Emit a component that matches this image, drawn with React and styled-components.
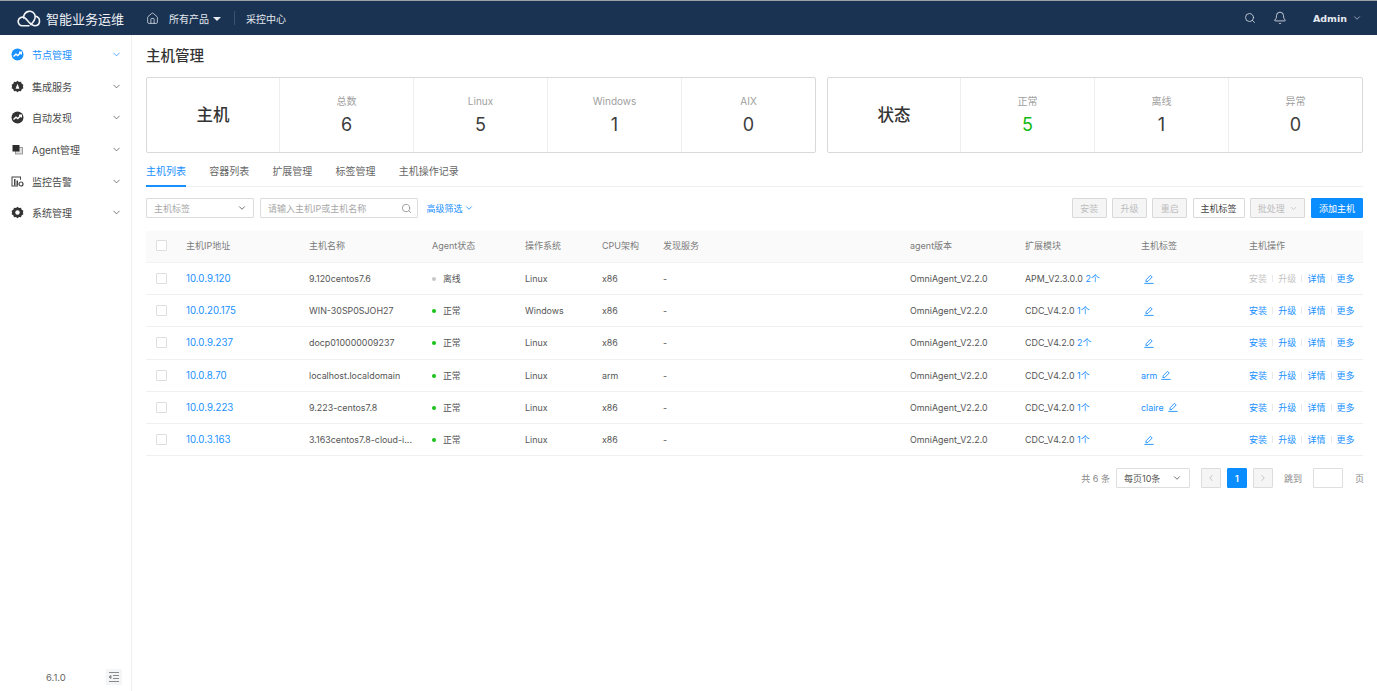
import React from "react";
import styled, { createGlobalStyle } from "styled-components";
import { ChevronDown, ChevronLeft, ChevronRight, Search, Bell, House } from "lucide-react";

const Global = createGlobalStyle`
  html, body { margin: 0; padding: 0; background: #fff; }
  body { font-family: Inter, "Noto Sans CJK SC", sans-serif; color: #4a4a4a; -webkit-font-smoothing: antialiased; }
  * { box-sizing: border-box; }
`;

const Page = styled.div`width: 1377px; height: 691px; display: flex; flex-direction: column; overflow: hidden;`;
const Header = styled.header`height: 35px; flex: none; background: #1a3352; border-top: 1px solid #9aa0a6; display: flex; align-items: center; color: #e4e9ef; font-size: 10px;`;
const Brand = styled.div`width: 131px; flex: none; display: flex; align-items: center; padding-left: 17px; gap: 5px; font-size: 13px; color: #eef1f5; white-space: nowrap;`;
const NavHome = styled.div`margin-left: 15px; display: flex; align-items: center; color: #dfe5ec;`;
const NavItem = styled.div`margin-left: 10px; display: flex; align-items: center; gap: 4px; white-space: nowrap;`;
const Caret = styled.span`width: 0; height: 0; border-left: 4px solid transparent; border-right: 4px solid transparent; border-top: 4px solid #e9edf2; margin-top: 1px;`;
const NavSep = styled.span`width: 1px; height: 14px; background: #3b526e; margin-left: 13px;`;
const NavLink = styled.div`margin-left: 11px; white-space: nowrap;`;
const HeaderRight = styled.div`margin-left: auto; display: flex; align-items: center; padding-right: 15px; color: #e4e9ef;`;
const AdminName = styled.span`font-family: "DejaVu Sans", sans-serif; font-size: 9.5px; font-weight: 700; margin-left: 26px; margin-right: 5px;`;
const BellWrap = styled.span`display: flex; margin-left: 17px;`;

const Body = styled.div`flex: 1; display: flex; min-height: 0;`;
const Side = styled.aside`width: 132px; flex: none; border-right: 1px solid #eef0f2; padding-top: 4px; display: flex; flex-direction: column; position: relative;`;
const SideRow = styled.div`height: 31.6px; display: flex; align-items: center; padding-left: 11px; padding-right: 9.5px; font-size: 10px; color: ${p => (p.$on ? "#1890ff" : "#4a4a4a")};`;
const SideIcon = styled.span`width: 13px; height: 13px; display: flex; margin-right: 8px; flex: none;`;
const SideText = styled.span`flex: 1; white-space: nowrap;`;
const SideFoot = styled.div`margin-top: auto; height: 28px; display: flex; align-items: center; padding-left: 46px; padding-right: 9px; justify-content: space-between; font-size: 9.5px; color: #666;`;
const Collapse = styled.span`width: 16px; height: 16px; background: #f4f5f6; display: flex; align-items: center; justify-content: center;`;

const Main = styled.main`flex: 1; min-width: 0; padding: 0 14px;`;
const Title = styled.h1`margin: 0; height: 42px; padding-bottom: 4px; display: flex; align-items: center; font-size: 14.5px; font-weight: 500; color: #333;`;
const Stats = styled.div`display: flex; gap: 11px;`;
const StatCard = styled.div`width: ${p => p.$w}px; height: 76px; flex: none; display: flex; border: 1px solid #d9d9d9; border-radius: 2px;`;
const StatHead = styled.div`width: 132px; flex: none; display: flex; align-items: center; justify-content: center; font-size: 16.5px; font-weight: 500; color: #333; padding-bottom: 2px;`;
const StatCell = styled.div`flex: 1; border-left: 1px solid #eeeeee; display: flex; flex-direction: column; align-items: center; padding-top: 17px;`;
const StatLabel = styled.div`font-size: 10px; line-height: 13px; color: #a0a0a0;`;
const StatValue = styled.div`font-size: 18px; line-height: 24px; margin-top: 5px; color: ${p => p.$c || "#3c3c3c"};`;

const Tabs = styled.div`display: flex; gap: 23.2px; height: 34px; border-bottom: 1px solid #f0f0f0;`;
const Tab = styled.div`height: 34px; display: flex; align-items: center; padding-top: 3px; font-size: 10px; white-space: nowrap; color: ${p => (p.$on ? "#1890ff" : "#666")}; border-bottom: 2px solid ${p => (p.$on ? "#1890ff" : "transparent")};`;

const Bar = styled.div`display: flex; align-items: center; height: 20px; margin-top: 11px; font-size: 9px;`;
const SelectBox = styled.div`width: 107.5px; height: 20px; border: 1px solid #dcdcdc; border-radius: 1px; display: flex; align-items: center; justify-content: space-between; padding: 0 6px 0 7px; color: #a8a8a8;`;
const SearchBox = styled.div`width: 158px; height: 20px; margin-left: 6.5px; border: 1px solid #dcdcdc; border-radius: 1px; display: flex; align-items: center; justify-content: space-between; padding: 0 5px 0 7px; color: #a8a8a8; white-space: nowrap;`;
const Advanced = styled.div`margin-left: 8.5px; display: flex; align-items: center; gap: 1.5px; color: #1890ff; white-space: nowrap;`;
const Actions = styled.div`margin-left: auto; display: flex; gap: 5.7px;`;
const Btn = styled.div`height: 20px; width: ${p => p.$w}px; display: flex; align-items: center; justify-content: center; gap: 4px; font-size: 9px; border-radius: 1px; white-space: nowrap;
  border: 1px solid ${p => (p.$kind === "primary" ? "#0a8dff" : "#d9d9d9")};
  background: ${p => (p.$kind === "primary" ? "#0a8dff" : p.$kind === "off" ? "#f5f5f5" : "#fff")};
  color: ${p => (p.$kind === "primary" ? "#fff" : p.$kind === "off" ? "#bdbdbd" : "#444")};`;

const Table = styled.div`margin-top: 13px;`;
const cols = "40px 123px 123px 93px 77px 61px 247px 115px 116px 108px 1fr";
const HeadRow = styled.div`display: grid; grid-template-columns: ${cols}; height: 32px; padding-bottom: 2px; background: #fafafa; align-items: center; font-size: 9px; color: #7a7a7a; border-bottom: 1px solid #f2f2f2;`;
const Row = styled.div`display: grid; grid-template-columns: ${cols}; height: 32.2px; align-items: center; font-size: 8.9px; color: #555; border-bottom: 1px solid #f0f0f0; white-space: nowrap;`;
const CheckCell = styled.div`padding-left: 10px; display: flex;`;
const Check = styled.span`width: 11px; height: 11px; border: 1px solid #dedede; border-radius: 1px; background: #fff;`;
const IpLink = styled.span`color: #1890ff; font-size: 9.7px;`;
const Dot = styled.span`display: inline-block; width: 4px; height: 4px; border-radius: 50%; margin-right: 7px; vertical-align: 1px; background: ${p => (p.$on ? "#17c317" : "#c8c8c8")};`;
const Blue = styled.span`color: #1890ff;`;
const TagCell = styled.div`display: flex; align-items: center; gap: 4px; color: #1890ff; padding-left: ${p => (p.$empty ? "3px" : "0")};`;
const Ops = styled.div`display: flex; align-items: center; font-size: 9px;`;
const Op = styled.span`color: ${p => (p.$off ? "#c4c4c4" : "#1890ff")};`;
const OpSep = styled.span`width: 1px; height: 7px; background: #eaeaea; margin: 0 5.1px;`;

const Pager = styled.div`display: flex; align-items: center; justify-content: flex-end; height: 20px; margin-top: 12px; font-size: 9px; color: #888; white-space: nowrap;`;
const PageSelect = styled.div`width: 74px; height: 20px; margin-left: 6px; border: 1px solid #dedede; border-radius: 1px; display: flex; align-items: center; justify-content: space-between; padding: 0 7px; color: #555;`;
const PageBtn = styled.div`width: 20px; height: 20px; display: flex; align-items: center; justify-content: center; margin-left: ${p => p.$ml || 6}px; border-radius: 1px; border: 1px solid ${p => (p.$on ? "#0a8dff" : "#dcdcdc")}; background: ${p => (p.$on ? "#0a8dff" : "#f5f5f5")}; color: ${p => (p.$on ? "#fff" : "#b8b8b8")}; font-weight: ${p => (p.$on ? 600 : 400)};`;
const Jump = styled.span`margin-left: 11px;`;
const JumpInput = styled.div`width: 30px; height: 20px; margin-left: 11px; border: 1px solid #dedede; border-radius: 1px;`;
const PageUnit = styled.span`margin-left: 12px; margin-right: -1px;`;

const Logo = () => (
  <svg width="24" height="17" viewBox="0 0 24 17" fill="none" stroke="#f2f4f7" strokeWidth="1.6" strokeLinecap="round">
    <path d="M12 15.800H5.500A4.300 4.300 0 1 1 7.500 7.700C10.500 9 12.500 15.800 18.500 15.800A4.800 4.800 0 0 0 18.300 6.300" />
    <path d="M6.700 8A5.800 5.800 0 0 1 18.300 6.300C18.300 9.500 16 12.500 13.800 14.500" />
  </svg>
);
const EditGlyph = () => (
  <svg width="10" height="10" viewBox="0 0 10 10" fill="none" stroke="#1890ff" strokeWidth="0.9">
    <path d="M2.200 5.700L6.500 1.300l1.700 1.700-4.300 4.400-2 .3z" />
    <path d="M0.300 9.400h9.400" />
  </svg>
);
const IconTrend = ({ c }) => (
  <svg width="13" height="13" viewBox="0 0 13 13"><circle cx="6.500" cy="6.500" r="6" fill={c} /><path d="M2.500 8.500l2.500-2.300 1.800 1.300 3-3M8 4.300h2.300v2.300" fill="none" stroke="#fff" strokeWidth="1.400" /></svg>
);
const IconGear = ({ letter }) => (
  <svg width="13" height="13" viewBox="0 0 13 13"><path d="M6.500 .7l1.500 1.300 2-.2.700 1.900 1.700 1-.5 1.800.5 1.800-1.700 1-.7 1.900-2-.2-1.500 1.300-1.500-1.300-2 .2-.7-1.900-1.700-1 .5-1.800-.5-1.800 1.700-1 .7-1.900 2 .2z" fill="#333" />{letter ? <path d="M6.500 3.800L4.600 8.800h3.800z" fill="#fff" /> : <circle cx="6.500" cy="6.500" r="2.200" fill="#fff" />}</svg>
);
const IconCopy = () => (
  <svg width="13" height="13" viewBox="0 0 13 13"><rect x="4.500" y="4.500" width="7" height="6.500" fill="#ddd" stroke="#888" strokeWidth=".8" /><rect x="1.500" y="2" width="7" height="6.500" fill="#2c2c2c" /></svg>
);
const IconMonitor = () => (
  <svg width="13" height="13" viewBox="0 0 13 13" fill="#444"><path d="M.5 1.500h9.500v3.200H9V2.500H1.500v8H7v1H.5z" /><path d="M3 4h1.500v6.500H3zM5.500 5.500H7v5H5.500z" /><circle cx="10" cy="9" r="2" fill="none" stroke="#444" strokeWidth="1.200" /></svg>
);
const IconCollapse = () => (
  <svg width="12" height="10" viewBox="0 0 12 10" stroke="#8a8a8a" strokeWidth="1" fill="none"><path d="M1 .5h10M5 3.500h6M5 6.500h6M1 9.500h10" /><path d="M3 3.500L1 5l2 1.500z" fill="#8a8a8a" /></svg>
);

const menu = [
  { t: "节点管理", i: <IconTrend c="#1890ff" />, on: true },
  { t: "集成服务", i: <IconGear letter /> },
  { t: "自动发现", i: <IconTrend c="#333" /> },
  { t: "Agent管理", i: <IconCopy /> },
  { t: "监控告警", i: <IconMonitor /> },
  { t: "系统管理", i: <IconGear /> },
];

const rows = [
  ["10.0.9.120", "9.120centos7.6", false, "Linux", "x86", "APM_V2.3.0.0", "2个", "", true],
  ["10.0.20.175", "WIN-30SP0SJOH27", true, "Windows", "x86", "CDC_V4.2.0", "1个", "", false],
  ["10.0.9.237", "docp010000009237", true, "Linux", "x86", "CDC_V4.2.0", "2个", "", false],
  ["10.0.8.70", "localhost.localdomain", true, "Linux", "arm", "CDC_V4.2.0", "1个", "arm", false],
  ["10.0.9.223", "9.223-centos7.8", true, "Linux", "x86", "CDC_V4.2.0", "1个", "claire", false],
  ["10.0.3.163", "3.163centos7.8-cloud-i...", true, "Linux", "x86", "CDC_V4.2.0", "1个", "", false],
];

const Stat = ({ label, value, color }) => (
  <StatCell><StatLabel>{label}</StatLabel><StatValue $c={color}>{value}</StatValue></StatCell>
);

export default function App() {
  return (
    <Page>
      <Global />
      <Header>
        <Brand><Logo />智能业务运维</Brand>
        <NavHome><House size={13} strokeWidth={1.4} /></NavHome>
        <NavItem>所有产品<Caret /></NavItem>
        <NavSep />
        <NavLink>采控中心</NavLink>
        <HeaderRight>
          <Search size={12} strokeWidth={1.5} />
          <BellWrap><Bell size={14} strokeWidth={1.4} /></BellWrap>
          <AdminName>Admin</AdminName>
          <ChevronDown size={10} strokeWidth={1.5} />
        </HeaderRight>
      </Header>
      <Body>
        <Side>
          {menu.map(m => (
            <SideRow key={m.t} $on={m.on}>
              <SideIcon>{m.i}</SideIcon>
              <SideText>{m.t}</SideText>
              <ChevronDown size={11} strokeWidth={1.6} />
            </SideRow>
          ))}
          <SideFoot>6.1.0<Collapse><IconCollapse /></Collapse></SideFoot>
        </Side>
        <Main>
          <Title>主机管理</Title>
          <Stats>
            <StatCard $w={670}>
              <StatHead>主机</StatHead>
              <Stat label="总数" value="6" />
              <Stat label="Linux" value="5" />
              <Stat label="Windows" value="1" />
              <Stat label="AIX" value="0" />
            </StatCard>
            <StatCard $w={536}>
              <StatHead>状态</StatHead>
              <Stat label="正常" value="5" color="#14b914" />
              <Stat label="离线" value="1" />
              <Stat label="异常" value="0" />
            </StatCard>
          </Stats>
          <Tabs>
            <Tab $on>主机列表</Tab>
            <Tab>容器列表</Tab>
            <Tab>扩展管理</Tab>
            <Tab>标签管理</Tab>
            <Tab>主机操作记录</Tab>
          </Tabs>
          <Bar>
            <SelectBox>主机标签<ChevronDown size={10} color="#555" /></SelectBox>
            <SearchBox>请输入主机IP或主机名称<Search size={11} color="#999" /></SearchBox>
            <Advanced>高级筛选<ChevronDown size={10} /></Advanced>
            <Actions>
              <Btn $w={34.500} $kind="off">安装</Btn>
              <Btn $w={34.500} $kind="off">升级</Btn>
              <Btn $w={34.500} $kind="off">重启</Btn>
              <Btn $w={52}>主机标签</Btn>
              <Btn $w={55} $kind="off">批处理<ChevronDown size={9} /></Btn>
              <Btn $w={52} $kind="primary">添加主机</Btn>
            </Actions>
          </Bar>
          <Table>
            <HeadRow>
              <CheckCell><Check /></CheckCell>
              <div>主机IP地址</div><div>主机名称</div><div>Agent状态</div><div>操作系统</div><div>CPU架构</div><div>发现服务</div><div>agent版本</div><div>扩展模块</div><div>主机标签</div><div>主机操作</div>
            </HeadRow>
            {rows.map(r => (
              <Row key={r[0]}>
                <CheckCell><Check /></CheckCell>
                <IpLink>{r[0]}</IpLink>
                <div>{r[1]}</div>
                <div><Dot $on={r[2]} />{r[2] ? "正常" : "离线"}</div>
                <div>{r[3]}</div>
                <div>{r[4]}</div>
                <div>-</div>
                <div>OmniAgent_V2.2.0</div>
                <div>{r[5]} <Blue>{r[6]}</Blue></div>
                <TagCell $empty={!r[7]}>{r[7]}<EditGlyph /></TagCell>
                <Ops>
                  <Op $off={r[8]}>安装</Op><OpSep />
                  <Op $off={r[8]}>升级</Op><OpSep />
                  <Op>详情</Op><OpSep />
                  <Op>更多</Op>
                </Ops>
              </Row>
            ))}
          </Table>
          <Pager>
            共 6 条
            <PageSelect>每页10条<ChevronDown size={10} /></PageSelect>
            <PageBtn $ml={11}><ChevronLeft size={10} /></PageBtn>
            <PageBtn $on>1</PageBtn>
            <PageBtn><ChevronRight size={10} /></PageBtn>
            <Jump>跳到</Jump>
            <JumpInput />
            <PageUnit>页</PageUnit>
          </Pager>
        </Main>
      </Body>
    </Page>
  );
}
